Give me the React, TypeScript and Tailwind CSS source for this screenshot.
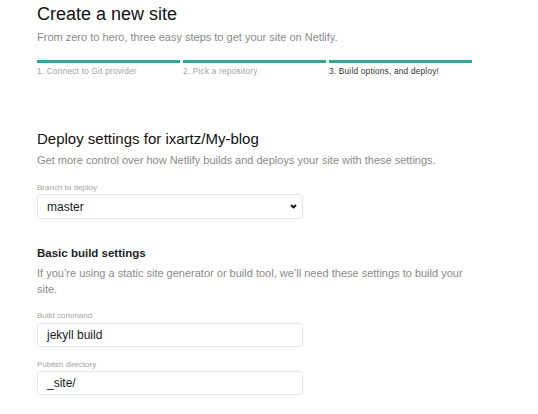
import React from "react";

export default function App() {
  const font = { fontFamily: "'Liberation Sans', Arial, sans-serif" };
  return (
    <div className="w-[538px] h-[414px] bg-white overflow-hidden" style={font}>
      <div className="pl-[37px] w-[472px] pt-[3px]">
        <h1 className="text-[18px] leading-[22px] text-[#111] font-normal">Create a new site</h1>
        <p className="mt-[4px] text-[11px] leading-[16px] text-[#8a8a8a]">
          From zero to hero, three easy steps to get your site on Netlify.
        </p>
        <div className="mt-[15px] grid grid-cols-3 gap-[3px]">
          {["1. Connect to Git provider", "2. Pick a repository", "3. Build options, and deploy!"].map((s, i) => (
            <div key={s}>
              <div className="h-[3px] bg-[#35a596]" />
              <div className={`mt-[3px] text-[8.3px] leading-[10px] tracking-[0.2px] ${i === 2 ? "text-[#333]" : "text-[#a3a3a3]"}`}>{s}</div>
            </div>
          ))}
        </div>

        <h2 className="mt-[53px] text-[15px] leading-[20px] text-[#111] font-normal">Deploy settings for ixartz/My-blog</h2>
        <p className="mt-[3px] text-[11px] leading-[16px] text-[#8a8a8a]">
          Get more control over how Netlify builds and deploys your site with these settings.
        </p>

        <div className="mt-[15px] text-[8px] leading-[10px] text-[#a3a3a3]">Branch to deploy</div>
        <div className="mt-[1px] w-[266px] h-[25px] border border-[#e6e6e6] rounded-[3px] flex items-center justify-between pl-[9px] pr-[5px]">
          <span className="text-[12px] leading-[16px] text-[#1a1a1a]">master</span>
          <svg width="7" height="5" viewBox="0 0 7 5"><path d="M1 1l2.5 2.5L6 1" stroke="#111" strokeWidth="1.8" fill="none" /></svg>
        </div>

        <h3 className="mt-[26px] text-[11.5px] leading-[16px] font-bold text-[#222]">Basic build settings</h3>
        <p className="mt-[4px] text-[11px] leading-[16px] text-[#8a8a8a] w-[435px]">
          If you’re using a static site generator or build tool, we’ll need these settings to build your site.
        </p>

        <div className="mt-[14px] text-[8px] leading-[10px] text-[#a3a3a3]">Build command</div>
        <div className="mt-[2px] w-[266px] h-[24px] border border-[#e6e6e6] rounded-[3px] flex items-center pl-[9px]">
          <span className="text-[12px] leading-[16px] text-[#1a1a1a]">jekyll build</span>
        </div>
        <div className="mt-[13px] text-[8px] leading-[10px] text-[#a3a3a3]">Publish directory</div>
        <div className="mt-[1px] w-[266px] h-[24px] border border-[#e6e6e6] rounded-[3px] flex items-center pl-[9px]">
          <span className="text-[12px] leading-[16px] text-[#1a1a1a]">_site/</span>
        </div>
      </div>
    </div>
  );
}
